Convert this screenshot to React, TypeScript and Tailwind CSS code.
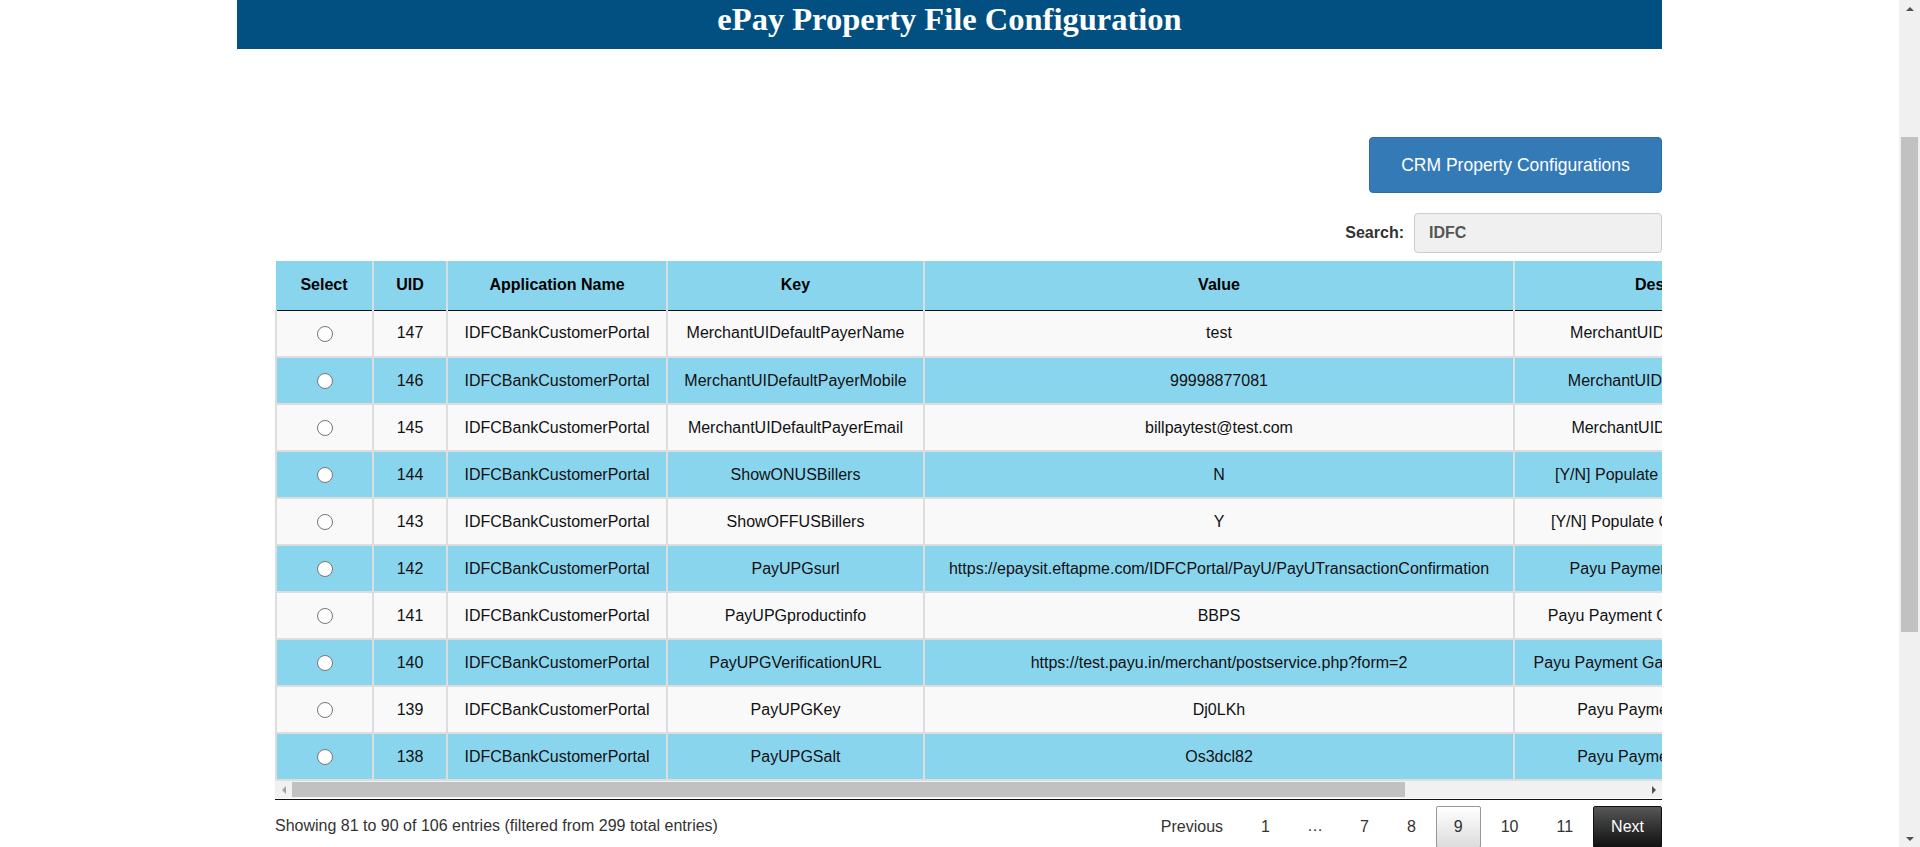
import type { ReactNode } from "react";

type Row = { uid: number; app: string; key: string; value: string; desc: string };

const rows: Row[] = [
  { uid: 147, app: "IDFCBankCustomerPortal", key: "MerchantUIDefaultPayerName", value: "test", desc: "MerchantUIDefaultPayerName" },
  { uid: 146, app: "IDFCBankCustomerPortal", key: "MerchantUIDefaultPayerMobile", value: "99998877081", desc: "MerchantUIDefaultPayerMobile" },
  { uid: 145, app: "IDFCBankCustomerPortal", key: "MerchantUIDefaultPayerEmail", value: "billpaytest@test.com", desc: "MerchantUIDefaultPayerEmail" },
  { uid: 144, app: "IDFCBankCustomerPortal", key: "ShowONUSBillers", value: "N", desc: "[Y/N] Populate ONUS Billers in List" },
  { uid: 143, app: "IDFCBankCustomerPortal", key: "ShowOFFUSBillers", value: "Y", desc: "[Y/N] Populate OFFUS Billers in List" },
  { uid: 142, app: "IDFCBankCustomerPortal", key: "PayUPGsurl", value: "https://epaysit.eftapme.com/IDFCPortal/PayU/PayUTransactionConfirmation", desc: "Payu Payment Gateway SURL" },
  { uid: 141, app: "IDFCBankCustomerPortal", key: "PayUPGproductinfo", value: "BBPS", desc: "Payu Payment Gateway Product Info" },
  { uid: 140, app: "IDFCBankCustomerPortal", key: "PayUPGVerificationURL", value: "https://test.payu.in/merchant/postservice.php?form=2", desc: "Payu Payment Gateway Verification URL" },
  { uid: 139, app: "IDFCBankCustomerPortal", key: "PayUPGKey", value: "Dj0LKh", desc: "Payu Payment Gateway Key" },
  { uid: 138, app: "IDFCBankCustomerPortal", key: "PayUPGSalt", value: "Os3dcl82", desc: "Payu Payment Gateway Salt" },
];

function Th({ children, first }: { children: ReactNode; first?: boolean }) {
  return (
    <th
      className={`h-[49px] border-b border-b-[#111] border-r-2 border-r-[#d4dfe3] text-center align-middle text-[16px] font-bold whitespace-nowrap text-black ${first ? "" : "border-l-2 border-l-[#d4dfe3]"}`}
    >
      {children}
    </th>
  );
}

function Td({ children }: { children: ReactNode }) {
  return (
    <td className="h-[47px] border-x-2 border-b-2 border-[#dddddd] px-[10px] text-center align-middle text-[16px] whitespace-nowrap overflow-hidden text-[#111]">
      {children}
    </td>
  );
}

function PageBtn({ label, current, dark }: { label: string; current?: boolean; dark?: boolean }) {
  let cls = "border-transparent text-[#333]";
  if (current) cls = "border-[#979797] bg-linear-to-b from-white to-[#dcdcdc] text-[#333]";
  if (dark) cls = "border-[#111] bg-linear-to-b from-[#585858] to-[#111] text-white";
  return (
    <span className={`ml-[2px] box-border inline-block h-[42px] rounded-[2px] border px-[17px] pt-[9px] text-center text-[16px] leading-[22px] ${cls}`}>
      {label}
    </span>
  );
}

function Arrow({ dir, color }: { dir: "up" | "down" | "left" | "right"; color: string }) {
  const vertical = dir === "up" || dir === "down";
  const pts = {
    up: "1,6 5,2 9,6",
    down: "1,2 5,6 9,2",
    left: "6,1 2,5 6,9",
    right: "2,1 6,5 2,9",
  }[dir];
  return (
    <svg width={vertical ? 10 : 8} height={vertical ? 8 : 10} viewBox={vertical ? "0 0 10 8" : "0 0 8 10"}>
      <polygon points={pts} fill={color} />
    </svg>
  );
}

export default function App() {
  return (
    <div className="flex h-screen w-full overflow-hidden bg-white font-['Liberation_Sans',Arial,sans-serif]">
      <div className="min-w-0 flex-1">
        <div className="ml-[237px] w-[1425px]">
          {/* Banner */}
          <div className="h-[49px] bg-[#015081] pt-[3px] text-center font-['Liberation_Serif','Times_New_Roman',serif] text-[32.5px] font-bold leading-none text-white">
            ePay Property File Configuration
          </div>

          <div className="pl-[38px]">
            <div className="flex justify-end pt-[88px]">
              <button className="h-[56px] w-[293px] rounded-[4px] border border-[#2e6da4] bg-[#337ab7] text-[17.5px] text-white">
                CRM Property Configurations
              </button>
            </div>

            <div className="mt-[20px] flex items-center justify-end">
              <span className="mr-[10px] text-[16px] font-bold text-[#333]">Search:</span>
              <div className="flex h-[40px] w-[248px] items-center rounded-[4px] border border-[#cccccc] bg-[#f0f0f0] pl-[14px] text-[16px] font-bold text-[#555]">
                IDFC
              </div>
            </div>

            {/* Table */}
            <div className="mt-[8px] w-[1387px] overflow-hidden">
              <table className="w-[1670px] table-fixed border-collapse">
                <colgroup>
                  <col className="w-[97px]" />
                  <col className="w-[74px]" />
                  <col className="w-[220px]" />
                  <col className="w-[257px]" />
                  <col className="w-[590px]" />
                  <col className="w-[330px]" />
                  <col className="w-[102px]" />
                </colgroup>
                <thead>
                  <tr className="bg-[#8ad5ee]">
                    <Th first>Select</Th>
                    <Th>UID</Th>
                    <Th>Application Name</Th>
                    <Th>Key</Th>
                    <Th>Value</Th>
                    <Th>Description</Th>
                    <Th>Status</Th>
                  </tr>
                </thead>
                <tbody>
                  {rows.map((r, i) => (
                    <tr key={r.uid} className={i % 2 === 0 ? "bg-[#f9f9f9]" : "bg-[#8ad5ee]"}>
                      <Td>
                        <span className="inline-block h-[16px] w-[16px] rounded-full border border-[#767676] bg-white align-middle" />
                      </Td>
                      <Td>{r.uid}</Td>
                      <Td>{r.app}</Td>
                      <Td>{r.key}</Td>
                      <Td>{r.value}</Td>
                      <Td>{r.desc}</Td>
                      <Td>Active</Td>
                    </tr>
                  ))}
                </tbody>
              </table>
            </div>

            {/* Horizontal scrollbar */}
            <div className="flex h-[17px] w-[1387px] items-center bg-[#f1f1f1]">
              <div className="flex h-[17px] w-[17px] items-center justify-center">
                <Arrow dir="left" color="#a3a3a3" />
              </div>
              <div className="h-[15px] w-[1113px] bg-[#c1c1c1]" />
              <div className="flex-1" />
              <div className="flex h-[17px] w-[17px] items-center justify-center">
                <Arrow dir="right" color="#505050" />
              </div>
            </div>
            <div className="mt-[1px] h-[1px] w-[1387px] bg-[#111]" />

            {/* Footer */}
            <div className="flex items-start justify-between pt-[6px]">
              <div className="pt-[9px] text-[16px] leading-[22px] text-[#333]">
                Showing 81 to 90 of 106 entries (filtered from 299 total entries)
              </div>
              <div className="flex items-start">
                <PageBtn label="Previous" />
                <PageBtn label="1" />
                <span className="ml-[2px] inline-block h-[42px] px-[17px] pt-[9px] text-[16px] leading-[22px] text-[#333]">…</span>
                <PageBtn label="7" />
                <PageBtn label="8" />
                <PageBtn label="9" current />
                <PageBtn label="10" />
                <PageBtn label="11" />
                <PageBtn label="Next" dark />
              </div>
            </div>
          </div>
        </div>
      </div>

      {/* Vertical scrollbar */}
      <div className="flex h-screen w-[21px] flex-col items-center bg-[#f0f0f0]">
        <div className="flex h-[17px] items-center justify-center">
          <Arrow dir="up" color="#505050" />
        </div>
        <div className="mt-[120px] h-[495px] w-[17px] bg-[#c1c1c1]" />
        <div className="flex-1" />
        <div className="flex h-[17px] items-center justify-center">
          <Arrow dir="down" color="#505050" />
        </div>
      </div>
    </div>
  );
}
